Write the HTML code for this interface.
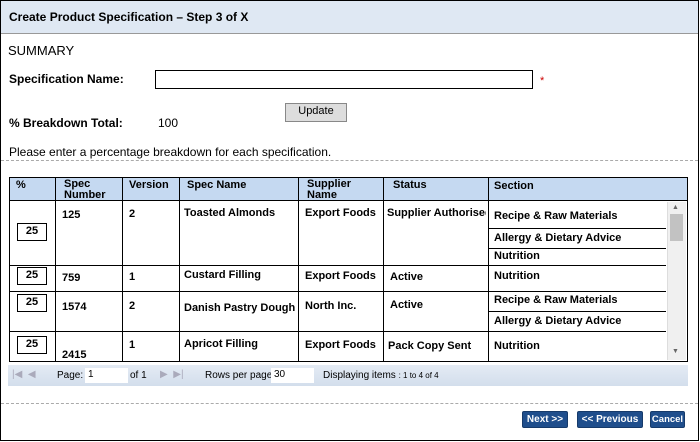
<!DOCTYPE html><html><head><style>
*{margin:0;padding:0;box-sizing:border-box}
body{width:700px;height:442px;background:#fff;font-family:"Liberation Sans",Arial,sans-serif;position:relative;overflow:hidden;color:#000}
.a{position:absolute;white-space:nowrap}
.b{font-weight:bold;font-size:11px}
.l{position:absolute;background:#000}
.pb{position:absolute;width:30px;height:18px;border:1px solid #000;font-size:11px;font-weight:bold;text-align:center;line-height:15px}
.btn{position:absolute;background:#1f4e8c;color:#fff;font-size:10px;font-weight:bold;text-align:center;line-height:16px;height:17px;border-radius:2px;border:1px solid #163a6a;overflow:hidden}
</style></head><body>
<div class="a" style="left:0;top:0;width:699px;height:441px;border:1px solid #000"></div>
<div class="a" style="left:1px;top:1px;width:697px;height:33px;background:#dfe8f3;border-bottom:1px solid #999"></div>
<div class="a b" style="left:9px;top:10px;font-size:12px">Create Product Specification – Step 3 of X</div>
<div class="a" style="left:8px;top:43px;font-size:13px">SUMMARY</div>
<div class="a b" style="left:9px;top:72px;font-size:12px">Specification Name:</div>
<div class="a" style="left:155px;top:70px;width:378px;height:19px;border:1px solid #000"></div>
<div class="a" style="left:540px;top:75px;color:#c00;font-size:11px">*</div>
<div class="a" style="left:285px;top:103px;width:62px;height:19px;background:#ddd;border:1px solid #888;font-size:11px;text-align:center;line-height:15px">Update</div>
<div class="a b" style="left:9px;top:116px;font-size:12px">% Breakdown Total:</div>
<div class="a" style="left:158px;top:116px;font-size:12px">100</div>
<div class="a" style="left:9px;top:145px;font-size:12px">Please enter a percentage breakdown for each specification.</div>
<div class="a" style="left:1px;top:160px;width:697px;border-top:1px dashed #aaa"></div>
<div class="a" style="left:9px;top:177px;width:679px;height:185px;border:1px solid #000"></div>
<div class="a" style="left:10px;top:178px;width:677px;height:23px;background:#c5d9f1;border-bottom:1px solid #000"></div>
<div class="l" style="left:55px;top:177px;width:1px;height:185px"></div>
<div class="l" style="left:122px;top:177px;width:1px;height:185px"></div>
<div class="l" style="left:179px;top:177px;width:1px;height:185px"></div>
<div class="l" style="left:298px;top:177px;width:1px;height:185px"></div>
<div class="l" style="left:383px;top:177px;width:1px;height:185px"></div>
<div class="l" style="left:488px;top:177px;width:1px;height:185px"></div>
<div class="l" style="left:9px;top:265px;width:479px;height:1px"></div>
<div class="l" style="left:9px;top:291px;width:479px;height:1px"></div>
<div class="l" style="left:9px;top:331px;width:479px;height:1px"></div>
<div class="l" style="left:488px;top:228px;width:178px;height:1px"></div>
<div class="l" style="left:488px;top:248px;width:178px;height:1px"></div>
<div class="l" style="left:488px;top:265px;width:178px;height:1px"></div>
<div class="l" style="left:488px;top:291px;width:178px;height:1px"></div>
<div class="l" style="left:488px;top:311px;width:178px;height:1px"></div>
<div class="l" style="left:488px;top:331px;width:178px;height:1px"></div>
<div class="a" style="left:667px;top:202px;width:19px;height:158px;background:#f0f0f0;border-left:1px solid #ddd"></div>
<div class="a" style="left:670px;top:214px;width:13px;height:27px;background:#c2c2c2"></div>
<div class="a" style="left:672px;top:204px;font-size:7px;color:#666">▲</div>
<div class="a" style="left:672px;top:348px;font-size:7px;color:#666">▼</div>
<div class="a b" style="left:16px;top:179px">%</div>
<div class="a b" style="left:64px;top:179px;line-height:11px">Spec<br>Number</div>
<div class="a b" style="left:129px;top:179px">Version</div>
<div class="a b" style="left:187px;top:179px">Spec Name</div>
<div class="a b" style="left:307px;top:179px;line-height:11px">Supplier<br>Name</div>
<div class="a b" style="left:393px;top:179px">Status</div>
<div class="a b" style="left:494px;top:180px">Section</div>
<div class="pb" style="left:17px;top:223px">25</div>
<div class="pb" style="left:17px;top:267px">25</div>
<div class="pb" style="left:17px;top:294px">25</div>
<div class="pb" style="left:17px;top:336px">25</div>
<div class="a b" style="left:62px;top:209px">125</div>
<div class="a b" style="left:62px;top:272px">759</div>
<div class="a b" style="left:62px;top:301px">1574</div>
<div class="a b" style="left:62px;top:349px">2415</div>
<div class="a b" style="left:129px;top:208px">2</div>
<div class="a b" style="left:129px;top:271px">1</div>
<div class="a b" style="left:129px;top:300px">2</div>
<div class="a b" style="left:129px;top:339px">1</div>
<div class="a b" style="left:184px;top:207px">Toasted Almonds</div>
<div class="a b" style="left:184px;top:269px">Custard Filling</div>
<div class="a b" style="left:184px;top:302px">Danish Pastry Dough</div>
<div class="a b" style="left:184px;top:338px">Apricot Filling</div>
<div class="a b" style="left:305px;top:207px">Export Foods</div>
<div class="a b" style="left:305px;top:270px">Export Foods</div>
<div class="a b" style="left:305px;top:300px">North Inc.</div>
<div class="a b" style="left:305px;top:339px">Export Foods</div>
<div class="a b" style="left:387px;top:207px;width:99px;overflow:hidden">Supplier Authorised</div>
<div class="a b" style="left:390px;top:271px">Active</div>
<div class="a b" style="left:390px;top:299px">Active</div>
<div class="a b" style="left:388px;top:340px">Pack Copy Sent</div>
<div class="a b" style="left:494px;top:210px">Recipe &amp; Raw Materials</div>
<div class="a b" style="left:494px;top:232px">Allergy &amp; Dietary Advice</div>
<div class="a b" style="left:494px;top:250px">Nutrition</div>
<div class="a b" style="left:494px;top:270px">Nutrition</div>
<div class="a b" style="left:494px;top:294px">Recipe &amp; Raw Materials</div>
<div class="a b" style="left:494px;top:315px">Allergy &amp; Dietary Advice</div>
<div class="a b" style="left:494px;top:340px">Nutrition</div>
<div class="a" style="left:8px;top:365px;width:680px;height:21px;background:linear-gradient(#e4ebf4,#d3deec)"></div>
<div class="a" style="left:12px;top:369px;font-size:10px;color:#aab">|◀ &nbsp;◀</div>
<div class="a" style="left:57px;top:370px;font-size:10px">Page:</div>
<div class="a" style="left:85px;top:368px;width:43px;height:15px;background:#fff;font-size:10px;padding-left:3px;line-height:14px">1</div>
<div class="a" style="left:130px;top:370px;font-size:10px">of 1</div>
<div class="a" style="left:160px;top:369px;font-size:10px;color:#aab">▶ &nbsp;▶|</div>
<div class="a" style="left:205px;top:370px;font-size:10px">Rows per page</div>
<div class="a" style="left:271px;top:368px;width:43px;height:15px;background:#fff;font-size:10px;padding-left:3px;line-height:14px">30</div>
<div class="a" style="left:323px;top:370px;font-size:10px">Displaying items <span style="font-size:8px">: 1 to 4 of 4</span></div>
<div class="a" style="left:1px;top:403px;width:697px;border-top:1px dashed #aaa"></div>
<div class="btn" style="left:522px;top:411px;width:46px">Next &gt;&gt;</div>
<div class="btn" style="left:577px;top:411px;width:66px">&lt;&lt; Previous</div>
<div class="btn" style="left:650px;top:411px;width:35px;font-size:9.5px">Cancel</div>
</body></html>
